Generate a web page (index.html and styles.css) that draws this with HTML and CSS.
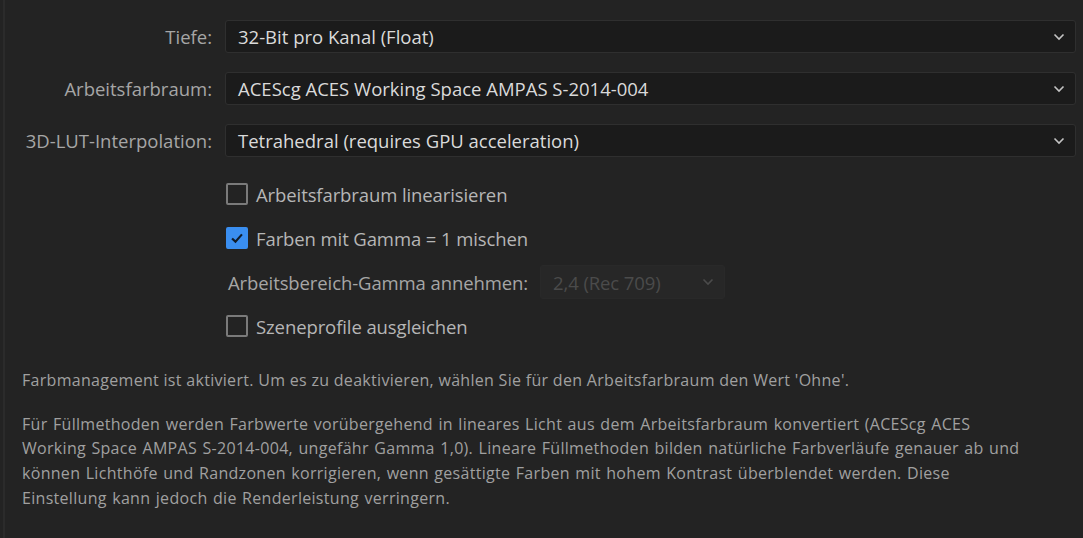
FILE: index.html
```html
<!DOCTYPE html>
<html lang="de">
<head>
<meta charset="utf-8">
<title>Projekteinstellungen – Farbe</title>
<link rel="stylesheet" href="styles.css">
</head>
<body>
<div class="panel">
  <div class="form">
    <label class="label">Tiefe:</label>
    <div class="select"><span>32-Bit pro Kanal (Float)</span><svg class="chev" viewBox="0 0 12 8"><path d="M1.5 1.5 L6 6 L10.5 1.5"/></svg></div>
    <label class="label">Arbeitsfarbraum:</label>
    <div class="select"><span>ACEScg ACES Working Space AMPAS S-2014-004</span><svg class="chev" viewBox="0 0 12 8"><path d="M1.5 1.5 L6 6 L10.5 1.5"/></svg></div>
    <label class="label">3D-LUT-Interpolation:</label>
    <div class="select"><span>Tetrahedral (requires GPU acceleration)</span><svg class="chev" viewBox="0 0 12 8"><path d="M1.5 1.5 L6 6 L10.5 1.5"/></svg></div>
  </div>
  <div class="options">
    <div class="check-row"><span class="box"></span><span>Arbeitsfarbraum linearisieren</span></div>
    <div class="check-row"><span class="box checked"><svg viewBox="0 0 20 20"><path d="M4.5 10.5 L8.3 14 L15.5 6"/></svg></span><span>Farben mit Gamma = 1 mischen</span></div>
    <div class="gamma-row"><span class="gamma-label">Arbeitsbereich-Gamma annehmen:</span><div class="select disabled"><span>2,4 (Rec 709)</span><svg class="chev" viewBox="0 0 12 8"><path d="M1.5 1.5 L6 6 L10.5 1.5"/></svg></div></div>
    <div class="check-row"><span class="box"></span><span>Szeneprofile ausgleichen</span></div>
  </div>
  <p class="note">Farbmanagement ist aktiviert. Um es zu deaktivieren, wählen Sie für den Arbeitsfarbraum den Wert 'Ohne'.</p>
  <p class="note long">Für Füllmethoden werden Farbwerte vorübergehend in lineares Licht aus dem Arbeitsfarbraum konvertiert (ACEScg ACES<br>Working Space AMPAS S-2014-004, ungefähr Gamma 1,0). Lineare Füllmethoden bilden natürliche Farbverläufe genauer ab und<br>können Lichthöfe und Randzonen korrigieren, wenn gesättigte Farben mit hohem Kontrast überblendet werden. Diese<br>Einstellung kann jedoch die Renderleistung verringern.</p>
</div>
</body>
</html>
```
FILE: styles.css
```css
html, body {
  margin: 0;
  padding: 0;
  background: #232323;
  height: 100%;
}
body {
  padding-left: 3px;
  box-sizing: border-box;
  font-family: "Open Sans", "Noto Sans", sans-serif;
}
.panel {
  border-left: 2px solid #2b2b2b;
  min-height: 100%;
  box-sizing: border-box;
  padding: 20px 7px 0 17px;
}
.form {
  display: grid;
  grid-template-columns: 190px 1fr;
  column-gap: 13px;
  row-gap: 19px;
  align-items: center;
}
.label {
  text-align: right;
  color: #a6a6a6;
  font-size: 18.5px;
  white-space: nowrap;
}
.select {
  height: 33px;
  box-sizing: border-box;
  background: #1b1b1b;
  border: 1px solid #2f2f2f;
  border-radius: 3px;
  display: flex;
  align-items: center;
  justify-content: space-between;
  padding: 0 10px 0 12px;
  color: #dadada;
  font-size: 18.5px;
  white-space: nowrap;
}
.chev {
  width: 12px;
  height: 8px;
  fill: none;
  stroke: #c4c4c4;
  stroke-width: 1.6;
}
.options {
  margin: 15px 0 0 204px;
  display: flex;
  flex-direction: column;
}
.check-row {
  height: 44px;
  display: flex;
  align-items: center;
  gap: 8px;
  color: #b6b6b6;
  font-size: 18.5px;
  letter-spacing: -0.1px;
}
.box {
  width: 18px;
  height: 18px;
  border: 2px solid #7a7a7a;
  border-radius: 2px;
  display: flex;
  align-items: center;
  justify-content: center;
  flex: none;
}
.box.checked {
  background: #3a8ef0;
  border-color: #3a8ef0;
}
.box svg {
  width: 18px;
  height: 18px;
  fill: none;
  stroke: #111c2a;
  stroke-width: 2.4;
}
.gamma-row {
  height: 44px;
  display: flex;
  align-items: center;
  gap: 12px;
  margin-left: 2px;
  color: #a6a6a6;
  font-size: 18.5px;
  letter-spacing: -0.1px;
}
.select.disabled {
  width: 185px;
  height: 34px;
  background: #272727;
  border-color: #292929;
  color: #4b4b4b;
}
.select.disabled .chev {
  stroke: #4b4b4b;
}
.note {
  margin: 20px 0 0 0;
  color: #a0a0a0;
  font-size: 16px;
  line-height: 24.7px;
  letter-spacing: 0.3px;
  white-space: nowrap;
}
.note.long {
  margin-top: 19px;
  word-spacing: 1px;
}
```
